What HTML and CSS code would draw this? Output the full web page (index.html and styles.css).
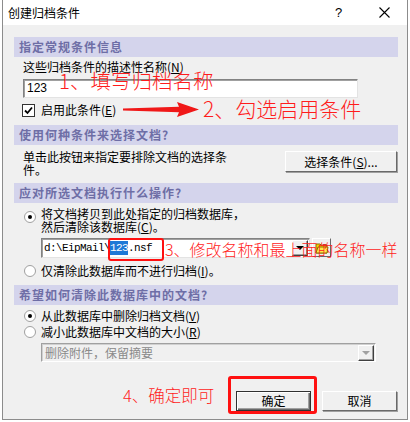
FILE: index.html
```html
<!DOCTYPE html>
<html lang="zh">
<head>
<meta charset="utf-8">
<title>创建归档条件</title>
<link rel="stylesheet" href="styles.css">
</head>
<body>
<div class="window">
  <div class="titlebar">
    <span class="title">创建归档条件</span>
    <span class="help">?</span>
    <svg class="close" width="11" height="11" viewBox="0 0 11 11"><path d="M0.5 0.5 L10.5 10.5 M10.5 0.5 L0.5 10.5" stroke="#000" stroke-width="1.1"/></svg>
  </div>
  <div class="content">
    <div class="hdr">指定常规条件信息</div>
    <div class="label">这些归档条件的描述性名称(<u>N</u>)</div>
    <div class="textbox">123</div>
    <div class="checkrow"><span class="checkbox"><svg width="9" height="9" viewBox="0 0 9 9"><path d="M1 4.5 L3.5 7 L8 1.5" fill="none" stroke="#000" stroke-width="1.8"/></svg></span>启用此条件(<u>E</u>)</div>

    <div class="hdr hdr2">使用何种条件来选择文档?</div>
    <div class="selrow">
      <p class="seltext">单击此按钮来指定要排除文档的选择条件。</p>
      <div class="btn selbtn">选择条件(<u>S</u>)...</div>
    </div>

    <div class="hdr hdr3">应对所选文档执行什么操作?</div>
    <div class="opt opt1"><span class="radio on"></span><span class="twoline">将文档拷贝到此处指定的归档数据库，<br>然后清除该数据库(<u>C</u>)。</span></div>
    <div class="comborow">
      <div class="combo">
        <span class="ctext">d:\EipMail\<span class="sel">123</span>.nsf</span>
        <span class="cbtn"><span class="tri"></span></span>
      </div>
      <div class="folderbtn">
        <svg width="14" height="12" viewBox="0 0 14 12"><path d="M1 2 H5 L6 3 H12 V11 H1 Z" fill="#f5d000" stroke="#8a6d00" stroke-width="1"/><path d="M3 5 H13 L12 11 H1 Z" fill="#ffe84a" stroke="#8a6d00" stroke-width="1"/><rect x="8" y="2" width="3" height="2" fill="#e03030"/></svg>
      </div>
    </div>
    <div class="opt opt2"><span class="radio"></span>仅清除此数据库而不进行归档(<u>I</u>)。</div>

    <div class="hdr hdr4">希望如何清除此数据库中的文档?</div>
    <div class="opt opt3"><span class="radio on"></span>从此数据库中删除归档文档(<u>V</u>)</div>
    <div class="opt opt4"><span class="radio"></span>减小此数据库中文档的大小(<u>R</u>)</div>
    <div class="combo2">
      <span class="ctext2">删除附件，保留摘要</span>
      <span class="cbtn2"><span class="tri grey"></span></span>
    </div>

    <div class="btnrow">
      <div class="btn okbtn">确定</div>
      <div class="btn cancelbtn">取消</div>
    </div>
  </div>

  <div class="note n1">1、填写归档名称</div>
  <div class="note n2">2、勾选启用条件</div>
  <div class="note n3">3、修改名称和最上面的名称一样</div>
  <div class="note n4">4、确定即可</div>
  <div class="redbox rb3"></div>
  <div class="redbox rb4"></div>
  <svg class="arrow" width="406" height="420" viewBox="0 0 406 420"><polygon points="120,108.6 176,106.8 174,102 196,109.5 174,117 176,112.2 120,110.4" fill="#f01818"/></svg>
</div>
</body>
</html>
```
FILE: styles.css
```css
html, body {
  margin: 0;
  padding: 0;
  background: #ffffff;
}
body {
  font-family: "Noto Sans CJK SC", "Noto Sans", sans-serif;
  font-size: 12px;
  color: #000;
}
u {
  text-decoration: underline;
}
.window {
  position: relative;
  margin-left: 2px;
  width: 406px;
  height: 420px;
  box-sizing: border-box;
  border: 1px solid #8c8c8c;
  border-top: none;
  background: #f0f0f0;
  overflow: hidden;
}
.titlebar {
  height: 25px;
  background: #ffffff;
  display: flex;
  align-items: center;
  padding-left: 5px;
  font-size: 12px;
}
.title {
  flex: 1;
  line-height: 14px;
}
.help {
  width: 10px;
  margin-right: 34px;
  font-family: "Liberation Sans", sans-serif;
  font-size: 13px;
}
.close {
  margin-right: 17px;
}
.content {
  display: flex;
  flex-direction: column;
  padding: 12px 9px 0 11px;
}
.hdr {
  height: 20px;
  line-height: 20px;
  background: #d4d4ec;
  color: #6e6ea6;
  font-weight: bold;
  letter-spacing: 1px;
  padding-left: 5px;
}
.label {
  margin: 3px 0 0 9px;
  line-height: 14px;
}
.textbox {
  margin: 5px 0 0 9px;
  width: 335px;
  height: 19px;
  box-sizing: border-box;
  background: #fff;
  border: 1px solid;
  border-color: #828282 #e3e3e3 #e3e3e3 #828282;
  box-shadow: inset 1px 1px 0 #a0a0a0;
  padding-left: 3px;
  font-family: "Liberation Sans", sans-serif;
  font-size: 12px;
  line-height: 17px;
}
.checkrow {
  margin: 5px 0 0 8px;
  height: 14px;
  line-height: 14px;
  display: flex;
  align-items: center;
}
.checkbox {
  width: 13px;
  height: 13px;
  box-sizing: border-box;
  background: #fff;
  border: 1px solid #333;
  margin-right: 6px;
  display: flex;
  align-items: center;
  justify-content: center;
}
.hdr2 { margin-top: 8px; }
.selrow {
  display: flex;
  justify-content: space-between;
  align-items: flex-start;
  margin-top: 5px;
}
.seltext {
  margin: 0 0 0 9px;
  width: 205px;
  line-height: 13px;
}
.btn {
  box-sizing: border-box;
  background: #f0f0f0;
  border: 1px solid;
  border-color: #ffffff #696969 #696969 #ffffff;
  box-shadow: 1px 1px 0 #a0a0a0;
  display: flex;
  align-items: center;
  justify-content: center;
  line-height: 14px;
}
.selbtn {
  margin-top: 1px;
  margin-right: 1px;
  width: 112px;
  height: 21px;
}
.hdr3 { margin-top: 7px; }
.opt {
  display: flex;
  align-items: center;
  margin-left: 10px;
  line-height: 14px;
}
.radio {
  width: 12px;
  height: 12px;
  box-sizing: border-box;
  border-radius: 50%;
  background: #fff;
  border: 1px solid #a0a0a0;
  margin-right: 5px;
  display: flex;
  align-items: center;
  justify-content: center;
  flex: none;
}
.radio.on::after {
  content: "";
  width: 4px;
  height: 4px;
  border-radius: 50%;
  background: #000;
}
.opt1 {
  margin-top: 5px;
  align-items: flex-start;
}
.opt1 .radio {
  margin-top: 3px;
}
.twoline {
  line-height: 12.5px;
}
.comborow {
  display: flex;
  margin: 5px 0 0 27px;
}
.combo {
  width: 269px;
  height: 20px;
  box-sizing: border-box;
  background: #fff;
  border: 1px solid;
  border-color: #828282 #e3e3e3 #e3e3e3 #828282;
  box-shadow: inset 1px 1px 0 #a0a0a0;
  display: flex;
  align-items: center;
  justify-content: space-between;
  padding: 1px 1px 1px 2px;
}
.ctext {
  font-family: "Liberation Mono", monospace;
  font-size: 11px;
  letter-spacing: -0.6px;
  line-height: 14px;
}
.sel {
  background: #1e78d6;
  color: #fff;
  padding: 1px 0;
}
.cbtn, .cbtn2 {
  width: 16px;
  height: 16px;
  box-sizing: border-box;
  background: #f0f0f0;
  border: 1px solid;
  border-color: #ffffff #404040 #404040 #ffffff;
  box-shadow: inset -1px -1px 0 #a0a0a0;
  display: flex;
  align-items: center;
  justify-content: center;
}
.tri {
  width: 0;
  height: 0;
  border-left: 4px solid transparent;
  border-right: 4px solid transparent;
  border-top: 4px solid #000;
}
.tri.grey {
  border-top-color: #a0a0a0;
}
.folderbtn {
  margin-left: 2px;
  width: 19px;
  height: 19px;
  box-sizing: border-box;
  background: #f0f0f0;
  border: 1px solid;
  border-color: #ffffff #696969 #696969 #ffffff;
  display: flex;
  align-items: center;
  justify-content: center;
}
.opt2 { margin-top: 6px; }
.hdr4 { margin-top: 7px; }
.opt3 { margin-top: 4px; }
.opt4 { margin-top: 2px; }
.combo2 {
  margin: 4px 0 0 27px;
  width: 335px;
  height: 19px;
  box-sizing: border-box;
  border: 1px solid;
  border-color: #a0a0a0 #ffffff #ffffff #a0a0a0;
  box-shadow: inset 1px 1px 0 #d0d0d0;
  background: #f0f0f0;
  display: flex;
  align-items: center;
  justify-content: space-between;
  padding: 1px;
}
.ctext2 {
  color: #8a8a8a;
  padding-left: 2px;
  line-height: 14px;
}
.btnrow {
  display: flex;
  justify-content: flex-end;
  gap: 11px;
  margin-top: 29px;
}
.okbtn, .cancelbtn {
  width: 75px;
  height: 20px;
}
.okbtn {
  border: 1px solid #303030;
  box-shadow: inset 1px 1px 0 #ffffff, inset -1px -1px 0 #696969, inset -2px -2px 0 #a0a0a0;
}
.cancelbtn {
  margin-right: 1px;
}
.note {
  position: absolute;
  color: #ff1c1c;
  font-family: "Noto Sans CJK SC", sans-serif;
  font-weight: 300;
  white-space: nowrap;
}
.n1 { left: 56px; top: 69px; font-size: 20.5px; line-height: 22px; }
.n2 { left: 200px; top: 97px; font-size: 21px; line-height: 23px; }
.n3 { left: 162px; top: 240px; font-size: 16px; line-height: 18px; }
.n4 { left: 120px; top: 386px; font-size: 16.5px; line-height: 18px; }
.redbox {
  position: absolute;
  border: 3px solid #ff1010;
  border-radius: 3px;
  box-sizing: border-box;
}
.rb3 { left: 105px; top: 238px; width: 56px; height: 23px; border-width: 2.5px; }
.rb4 { left: 225px; top: 376px; width: 89px; height: 38px; }
.arrow {
  position: absolute;
  left: 0;
  top: 0;
  pointer-events: none;
}
```
